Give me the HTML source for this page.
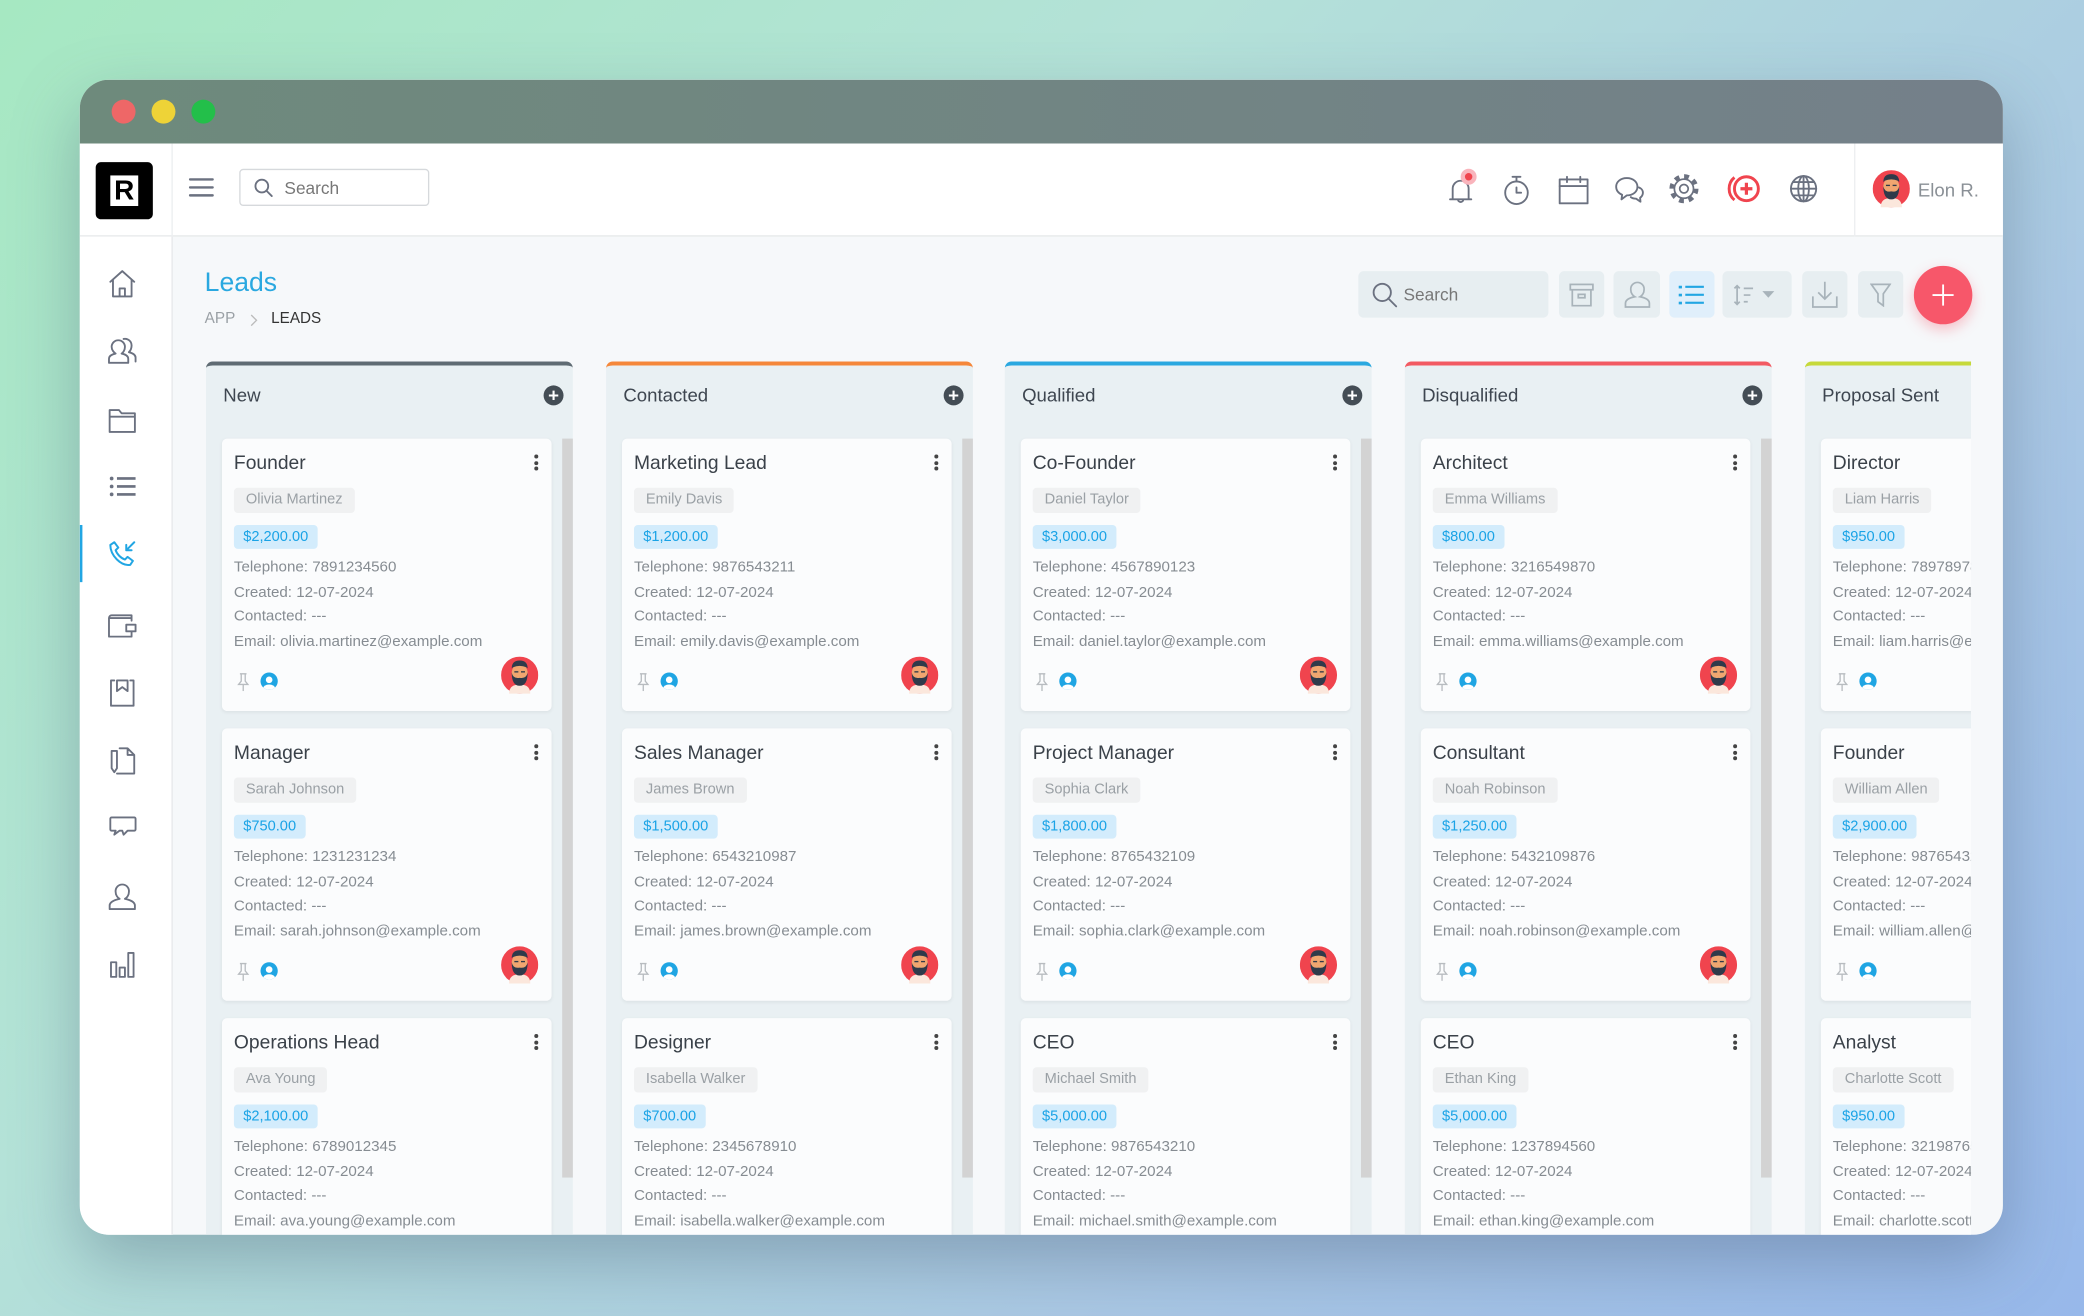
<!DOCTYPE html>
<html><head><meta charset="utf-8">
<style>
*{box-sizing:border-box;margin:0;padding:0}
html,body{width:2084px;height:1316px;overflow:hidden}
body{font-family:"Liberation Sans",sans-serif;background:linear-gradient(135deg,#a6e8c2 0%,#b4e2d8 35%,#aac8e4 70%,#97b8ea 100%)}
#s{position:absolute;left:0;top:0;width:1568px;height:990px;transform:scale(1.32908);transform-origin:0 0}
.win{position:absolute;left:60px;top:60px;width:1447px;height:869px;border-radius:22px;overflow:hidden;background:#f6f8fa;box-shadow:0 20px 50px rgba(60,80,110,.35)}
.tb{position:absolute;left:0;top:0;width:100%;height:48px;background:linear-gradient(90deg,#6e8a7c,#74808a)}
.dot{position:absolute;top:15px;width:18px;height:18px;border-radius:50%}
.hdr{position:absolute;left:0;top:48px;width:100%;height:70px;background:#fff;border-bottom:1px solid #e6e8ea}
.side{position:absolute;left:0;top:118px;width:70px;height:760px;background:#fff;border-right:1px solid #e6e8ea}
.a{position:absolute}
svg{display:block}
.ic{fill:none;stroke:#6b7180;stroke-width:1.4;stroke-linecap:round;stroke-linejoin:round}
.col{position:absolute;top:212px;width:276px;height:700px;background:#e9f0f3;border-radius:5px 5px 0 0;border-top:3px solid}
.col h3{position:absolute;left:13px;top:14px;font-size:14px;font-weight:normal;color:#3e4650}
.plus{position:absolute;left:254px;top:15px;width:15px;height:15px;border-radius:50%;background:#444d55;color:#fff;font-size:14px;line-height:14px;text-align:center;font-weight:bold}
.sb{position:absolute;left:268px;top:55px;width:8px;height:556px;background:#d3d3d3}
.card{position:absolute;left:12px;width:248px;height:205px;background:#fbfcfd;border-radius:4px;box-shadow:0 1px 3px rgba(0,0,0,.06)}
.card .t{position:absolute;left:9px;top:11px;font-size:14.5px;color:#3a4149}
.card .m{position:absolute;left:235px;top:12px;width:3px}
.card .m i{display:block;width:3px;height:3px;border-radius:50%;background:#444;margin-bottom:1.5px}
.card .n{position:absolute;left:9px;top:37px;height:19px;padding:0 9px;background:#f0f1f2;border-radius:3px;font-size:11px;line-height:19px;color:#9aa0a5}
.card .p{position:absolute;left:9px;top:65px;height:18px;padding:0 7px;background:#d3ecfc;border-radius:3px;font-size:11px;line-height:18px;color:#1aa3e6}
.card .l{position:absolute;left:9px;top:88px;font-size:11.4px;line-height:18.6px;color:#868c92;white-space:nowrap}
.card .pin{position:absolute;left:10px;top:176px}
.card .u{position:absolute;left:29px;top:176px;width:13px;height:13px;border-radius:50%;background:#1fa5e3;overflow:hidden}
.card .u:before{content:"";position:absolute;left:4px;top:2.5px;width:5px;height:5px;border-radius:50%;background:#fff}
.card .u:after{content:"";position:absolute;left:2px;top:8.5px;width:9px;height:6px;border-radius:50% 50% 0 0;background:#fff}
.card .av{position:absolute;left:210px;top:164px}
.tbtn{position:absolute;top:144px;height:35px;background:#e7eef1;border-radius:4px}
</style></head><body>
<svg width="0" height="0" style="position:absolute"><defs>
<symbol id="av" viewBox="0 0 28 28"><circle cx="14" cy="14" r="14" fill="#f0444e"/><path d="M6 28 Q6 21 14 21 Q22 21 22 28Z" fill="#fbe7dc"/><ellipse cx="14" cy="12.5" rx="6" ry="7" fill="#f0a670"/><path d="M8 9 Q8 3 14 3 Q20 3 20 9 L19 8 Q14 6 9 8Z" fill="#2f3a4a"/><path d="M8 12 Q8 22 14 22 Q20 22 20 12 Q19 17 14 16 Q9 17 8 12Z" fill="#2f3a4a"/><rect x="10" y="11" width="3" height="1" fill="#2f3a4a"/><rect x="15" y="11" width="3" height="1" fill="#2f3a4a"/></symbol>
<symbol id="pin" viewBox="0 0 12 14"><path d="M3.5 1h5M4.5 1v5.5L2.5 9h7L7.5 6.5V1M6 9v5" fill="none" stroke="#b8bcc0" stroke-width="1"/></symbol>
</defs></svg>
<div id="s">
<div class="win">
 <div class="tb"><div class="dot" style="left:24px;background:#ee6767"></div><div class="dot" style="left:54px;background:#eed337"></div><div class="dot" style="left:84px;background:#23bf4a"></div></div>
 <div class="hdr">
  <div class="a" style="left:12px;top:14px;width:43px;height:43px;background:#000;border-radius:4px"><div style="position:absolute;left:11px;top:10px;width:21px;height:23px;background:#fff;color:#000;font-size:21px;font-weight:bold;line-height:23px;text-align:center">R</div></div>
  <div style="position:absolute;left:69px;top:0;width:1px;height:70px;background:#eceef0"></div>
  <svg class="a ic" style="left:82px;top:25px" width="19" height="16" viewBox="0 0 19 16"><path d="M1 2h17M1 8h17M1 14h17" stroke-width="1.8"/></svg>
  <div class="a" style="left:120px;top:19px;width:143px;height:28px;border:1px solid #d6d9dc;border-radius:3px"><svg class="a ic" style="left:10px;top:6px" width="15" height="15" viewBox="0 0 15 15"><circle cx="6" cy="6" r="4.8"/><path d="M9.5 9.5l4 4"/></svg><span class="a" style="left:33px;top:6px;font-size:13px;color:#777">Search</span></div>
  <svg class="a ic" style="left:1028px;top:18px" width="26" height="30" viewBox="0 0 26 30"><path d="M3 24h16M5 24V16a6 6 0 0 1 12 0v8M9 24a2 2 0 0 0 4 0"/><circle cx="17" cy="7" r="6" fill="#f9b4bc" stroke="none"/><circle cx="17" cy="7" r="2.8" fill="#f0444e" stroke="none"/></svg>
  <svg class="a ic" style="left:1070px;top:23px" width="22" height="24" viewBox="0 0 22 24"><circle cx="11" cy="14" r="8.5"/><path d="M11 3v2.5M8 2h6M11 10v4h3.5"/></svg>
  <svg class="a ic" style="left:1112px;top:24px" width="24" height="22" viewBox="0 0 24 22"><rect x="1.5" y="3" width="21" height="18"/><path d="M1.5 8h21M7 1v4M17 1v4"/></svg>
  <svg class="a ic" style="left:1154px;top:24px" width="24" height="22" viewBox="0 0 24 22"><path d="M10 2c5 0 8 3 8 6.5S15 15 10 15l-4 3 .5-3.5C3.5 13.5 2 11 2 8.5 2 5 5 2 10 2z"/><path d="M19 9c2.5 1 3.5 3 3 5-.3 1.3-1 2.2-2 2.8l.3 3-3.3-2.3c-1.5 0-3-.4-4-1.2"/></svg>
  <svg class="a" style="left:1195px;top:22px" width="24" height="24" viewBox="0 0 24 24" fill="none" stroke="#6b7180"><circle cx="12" cy="12" r="9.2" stroke-width="3.5" stroke-dasharray="3.6 3.6"/><circle cx="12" cy="12" r="7.2" stroke-width="1.3" fill="#fff"/><circle cx="12" cy="12" r="3.2" stroke-width="1.3"/></svg>
  <svg class="a" style="left:1238px;top:22px" width="28" height="24" viewBox="0 0 28 24"><path d="M7 3.5C4.5 5.5 3 8.5 3 12s1.5 6.5 4 8.5" fill="none" stroke="#f0444e" stroke-width="2.2"/><circle cx="16" cy="12" r="9" fill="none" stroke="#f0444e" stroke-width="2.2"/><path d="M16 7.5v9M11.5 12h9" stroke="#f0444e" stroke-width="2.4"/></svg>
  <svg class="a ic" style="left:1286px;top:23px" width="22" height="22" viewBox="0 0 22 22"><circle cx="11" cy="11" r="9.5"/><ellipse cx="11" cy="11" rx="4" ry="9.5"/><path d="M1.5 11h19M3 6h16M3 16h16M11 1.5v19"/></svg>
  <div style="position:absolute;left:1335px;top:0;width:1px;height:70px;background:#eceef0"></div>
  <svg class="a" style="left:1349px;top:20px" width="28" height="28"><use href="#av"/></svg>
  <span class="a" style="left:1383px;top:27px;font-size:14px;color:#8a9096">Elon R.</span>
 </div>
 <div class="side">
  <svg class="a ic" style="left:21px;top:24px" width="22" height="22" viewBox="0 0 22 22"><path d="M2 10L11 2l9 8M4 8.5V21h14V8.5M9 21v-6h4v6"/></svg>
  <svg class="a ic" style="left:21px;top:75px" width="24" height="22" viewBox="0 0 24 22"><path d="M8 3a5 5 0 0 1 5 5c0 2.5-1.5 4.5-2.5 5 3 .6 5 2 5 4v3H1v-3c0-2 2-3.4 5-4C5 12.5 3 10.5 3 8a5 5 0 0 1 5-5zM12 2a5 5 0 0 1 6 5c0 2.5-1.2 4.2-2 5 3 .8 5 2 5 4v3"/></svg>
  <svg class="a ic" style="left:21px;top:129px" width="22" height="19" viewBox="0 0 22 19"><path d="M1.5 1.5h7l2 2.5h10v14h-19zM1.5 6.5h19"/></svg>
  <svg class="a" style="left:22px;top:180px" width="22" height="16" viewBox="0 0 22 16"><g fill="#6b7180"><circle cx="2" cy="2" r="1.4"/><circle cx="2" cy="8" r="1.4"/><circle cx="2" cy="14" r="1.4"/><rect x="6" y="1" width="14" height="2"/><rect x="6" y="7" width="14" height="2"/><rect x="6" y="13" width="14" height="2"/></g></svg>
  <div class="a" style="left:0;top:217px;width:2px;height:43px;background:#22a6e3"></div>
  <svg class="a" style="left:21px;top:228px" width="22" height="22" viewBox="0 0 22 22" fill="none" stroke="#22a6e3" stroke-width="1.5" stroke-linecap="round" stroke-linejoin="round"><path d="M5 2l3 4-2 2c1 3 4 6 7 7l2-2 4 3-2 3C10 20 2 12 2 4z"/><path d="M20 2l-6 6M14 4v4h4"/></svg>
  <svg class="a ic" style="left:21px;top:283px" width="22" height="20" viewBox="0 0 22 20"><path d="M18 6V2H3a2 2 0 0 0-2 2v14h17v-4M1 4h17v2M14 9h7v5h-7z"/></svg>
  <svg class="a ic" style="left:22px;top:332px" width="20" height="22" viewBox="0 0 20 22"><path d="M4 2H1.5v19h17V2H16M6 2h8v8l-4-3-4 3z"/></svg>
  <svg class="a ic" style="left:22px;top:383px" width="20" height="22" viewBox="0 0 20 22"><path d="M8 2h6l5 5v14H6M14 2v5h5M2 4h4v13l-2 3-2-3z"/></svg>
  <svg class="a ic" style="left:21px;top:436px" width="22" height="20" viewBox="0 0 22 20"><path d="M3 1h17a1 1 0 0 1 1 1v8a1 1 0 0 1-1 1h-5l-3 3-1-3H9l-4 3 1-3H3a1 1 0 0 1-1-1V2a1 1 0 0 1 1-1z"/></svg>
  <svg class="a ic" style="left:21px;top:486px" width="22" height="21" viewBox="0 0 22 21"><path d="M11 1.5a5 5 0 0 1 5 5.5c0 2.5-1.5 4.5-3 5.3 4 .8 7.5 2.5 7.5 5V20h-19v-2.7c0-2.5 3.5-4.2 7.5-5C7.5 11.5 6 9.5 6 7a5 5 0 0 1 5-5.5z"/></svg>
  <svg class="a ic" style="left:22px;top:537px" width="20" height="21" viewBox="0 0 20 21"><path d="M1.5 9h4v11h-4zM8 13h4v7H8zM14.5 2h4v18h-4z"/></svg>
 </div>
 <!-- content -->
 <div class="a" style="left:94px;top:142px;font-size:20px;color:#2aa8e0">Leads</div>
 <div class="a" style="left:94px;top:174px;font-size:11.5px;color:#9aa0a5">APP</div>
 <svg class="a" style="left:128px;top:176px" width="6" height="10" viewBox="0 0 6 10"><path d="M1 1l4 4-4 4" fill="none" stroke="#bbb" stroke-width="1"/></svg>
 <div class="a" style="left:144px;top:174px;font-size:11.5px;color:#333">LEADS</div>
 <div class="tbtn" style="left:962px;width:143px"><svg class="a ic" style="left:10px;top:8px" width="20" height="20" viewBox="0 0 20 20"><circle cx="8" cy="8" r="6.5"/><path d="M12.5 12.5l6 6"/></svg><span class="a" style="left:34px;top:10px;font-size:13px;color:#777">Search</span></div>
 <div class="tbtn" style="left:1113px;width:34px"><svg class="a" style="left:7px;top:8px" width="20" height="20" viewBox="0 0 20 20" fill="none" stroke="#a8b3ba" stroke-width="1.3"><rect x="1.5" y="2" width="17" height="4"/><path d="M3 6v12h14V6M7.5 9.5h5v2.5h-5z"/></svg></div>
 <div class="tbtn" style="left:1154px;width:35px"><svg class="a" style="left:8px;top:7px" width="20" height="21" viewBox="0 0 20 21" fill="none" stroke="#a8b3ba" stroke-width="1.3"><path d="M10 1.5a5 5 0 0 1 5 5.5c0 2.5-1.5 4.5-3 5.3 4 .8 7 2.5 7 5V20H1v-2.7c0-2.5 3-4.2 7-5C6.5 11.5 5 9.5 5 7a5 5 0 0 1 5-5.5z"/></svg></div>
 <div class="tbtn" style="left:1196px;width:34px;background:#e0effb"><svg class="a" style="left:7px;top:10px" width="20" height="16" viewBox="0 0 20 16"><g fill="#22a6e3"><rect x="0" y="1" width="2.5" height="2"/><rect x="0" y="7" width="2.5" height="2"/><rect x="0" y="13" width="2.5" height="2"/><rect x="5" y="1" width="14" height="1.6"/><rect x="5" y="7" width="14" height="1.6"/><rect x="5" y="13" width="14" height="1.6"/></g></svg></div>
 <div class="tbtn" style="left:1236px;width:52px"><svg class="a" style="left:8px;top:10px" width="38" height="16" viewBox="0 0 38 16" fill="none" stroke="#a8b3ba" stroke-width="1.3"><path d="M3 1v14M1 3l2-2 2 2M1 13l2 2 2-2M8 3h7M8 8h5M8 13h3"/><path d="M22 5h9l-4.5 5z" fill="#a8b3ba" stroke="none"/></svg></div>
 <div class="tbtn" style="left:1296px;width:34px"><svg class="a" style="left:7px;top:7px" width="20" height="21" viewBox="0 0 20 21" fill="none" stroke="#a8b3ba" stroke-width="1.3"><path d="M10 1v13M5 9l5 5 5-5M1 12v8h18v-8"/></svg></div>
 <div class="tbtn" style="left:1338px;width:34px"><svg class="a" style="left:9px;top:9px" width="16" height="18" viewBox="0 0 16 18" fill="none" stroke="#a8b3ba" stroke-width="1.3"><path d="M1 1h14l-5 7v9l-4-3V8z"/></svg></div>
 <div class="a" style="left:1380px;top:140px;width:44px;height:44px;border-radius:50%;background:#f7576a;box-shadow:0 4px 10px rgba(247,87,106,.35)"><svg class="a" style="left:14px;top:14px" width="16" height="16"><path d="M8 0v16M0 8h16" stroke="#fff" stroke-width="1.4"/></svg></div>

 <div class="a" style="left:94px;top:0;width:1329px;height:869px;overflow:hidden">
 <div class="col" style="left:1px;border-color:#5f6b73"><h3>New</h3><div class="plus">+</div><div class="sb"></div>
  <div class="card" style="top:55px"><div class="t">Founder</div><div class="m"><i></i><i></i><i></i></div><div class="n">Olivia Martinez</div><div class="p">$2,200.00</div><div class="l">Telephone: 7891234560<br>Created: 12-07-2024<br>Contacted: ---<br>Email: olivia.martinez@example.com</div><svg class="pin" width="12" height="14"><use href="#pin"/></svg><div class="u"></div><svg class="av" width="28" height="28"><use href="#av"/></svg></div>
  <div class="card" style="top:273px"><div class="t">Manager</div><div class="m"><i></i><i></i><i></i></div><div class="n">Sarah Johnson</div><div class="p">$750.00</div><div class="l">Telephone: 1231231234<br>Created: 12-07-2024<br>Contacted: ---<br>Email: sarah.johnson@example.com</div><svg class="pin" width="12" height="14"><use href="#pin"/></svg><div class="u"></div><svg class="av" width="28" height="28"><use href="#av"/></svg></div>
  <div class="card" style="top:491px"><div class="t">Operations Head</div><div class="m"><i></i><i></i><i></i></div><div class="n">Ava Young</div><div class="p">$2,100.00</div><div class="l">Telephone: 6789012345<br>Created: 12-07-2024<br>Contacted: ---<br>Email: ava.young@example.com</div></div>
 </div>
 <div class="col" style="left:302px;border-color:#f5873a"><h3>Contacted</h3><div class="plus">+</div><div class="sb"></div>
  <div class="card" style="top:55px"><div class="t">Marketing Lead</div><div class="m"><i></i><i></i><i></i></div><div class="n">Emily Davis</div><div class="p">$1,200.00</div><div class="l">Telephone: 9876543211<br>Created: 12-07-2024<br>Contacted: ---<br>Email: emily.davis@example.com</div><svg class="pin" width="12" height="14"><use href="#pin"/></svg><div class="u"></div><svg class="av" width="28" height="28"><use href="#av"/></svg></div>
  <div class="card" style="top:273px"><div class="t">Sales Manager</div><div class="m"><i></i><i></i><i></i></div><div class="n">James Brown</div><div class="p">$1,500.00</div><div class="l">Telephone: 6543210987<br>Created: 12-07-2024<br>Contacted: ---<br>Email: james.brown@example.com</div><svg class="pin" width="12" height="14"><use href="#pin"/></svg><div class="u"></div><svg class="av" width="28" height="28"><use href="#av"/></svg></div>
  <div class="card" style="top:491px"><div class="t">Designer</div><div class="m"><i></i><i></i><i></i></div><div class="n">Isabella Walker</div><div class="p">$700.00</div><div class="l">Telephone: 2345678910<br>Created: 12-07-2024<br>Contacted: ---<br>Email: isabella.walker@example.com</div></div>
 </div>
 <div class="col" style="left:602px;border-color:#2aa8e0"><h3>Qualified</h3><div class="plus">+</div><div class="sb"></div>
  <div class="card" style="top:55px"><div class="t">Co-Founder</div><div class="m"><i></i><i></i><i></i></div><div class="n">Daniel Taylor</div><div class="p">$3,000.00</div><div class="l">Telephone: 4567890123<br>Created: 12-07-2024<br>Contacted: ---<br>Email: daniel.taylor@example.com</div><svg class="pin" width="12" height="14"><use href="#pin"/></svg><div class="u"></div><svg class="av" width="28" height="28"><use href="#av"/></svg></div>
  <div class="card" style="top:273px"><div class="t">Project Manager</div><div class="m"><i></i><i></i><i></i></div><div class="n">Sophia Clark</div><div class="p">$1,800.00</div><div class="l">Telephone: 8765432109<br>Created: 12-07-2024<br>Contacted: ---<br>Email: sophia.clark@example.com</div><svg class="pin" width="12" height="14"><use href="#pin"/></svg><div class="u"></div><svg class="av" width="28" height="28"><use href="#av"/></svg></div>
  <div class="card" style="top:491px"><div class="t">CEO</div><div class="m"><i></i><i></i><i></i></div><div class="n">Michael Smith</div><div class="p">$5,000.00</div><div class="l">Telephone: 9876543210<br>Created: 12-07-2024<br>Contacted: ---<br>Email: michael.smith@example.com</div></div>
 </div>
 <div class="col" style="left:903px;border-color:#f25a62"><h3>Disqualified</h3><div class="plus">+</div><div class="sb"></div>
  <div class="card" style="top:55px"><div class="t">Architect</div><div class="m"><i></i><i></i><i></i></div><div class="n">Emma Williams</div><div class="p">$800.00</div><div class="l">Telephone: 3216549870<br>Created: 12-07-2024<br>Contacted: ---<br>Email: emma.williams@example.com</div><svg class="pin" width="12" height="14"><use href="#pin"/></svg><div class="u"></div><svg class="av" width="28" height="28"><use href="#av"/></svg></div>
  <div class="card" style="top:273px"><div class="t">Consultant</div><div class="m"><i></i><i></i><i></i></div><div class="n">Noah Robinson</div><div class="p">$1,250.00</div><div class="l">Telephone: 5432109876<br>Created: 12-07-2024<br>Contacted: ---<br>Email: noah.robinson@example.com</div><svg class="pin" width="12" height="14"><use href="#pin"/></svg><div class="u"></div><svg class="av" width="28" height="28"><use href="#av"/></svg></div>
  <div class="card" style="top:491px"><div class="t">CEO</div><div class="m"><i></i><i></i><i></i></div><div class="n">Ethan King</div><div class="p">$5,000.00</div><div class="l">Telephone: 1237894560<br>Created: 12-07-2024<br>Contacted: ---<br>Email: ethan.king@example.com</div></div>
 </div>
 <div class="col" style="left:1204px;border-color:#c6d93a"><h3>Proposal Sent</h3><div class="plus">+</div><div class="sb"></div>
  <div class="card" style="top:55px"><div class="t">Director</div><div class="m"><i></i><i></i><i></i></div><div class="n">Liam Harris</div><div class="p">$950.00</div><div class="l">Telephone: 7897897890<br>Created: 12-07-2024<br>Contacted: ---<br>Email: liam.harris@example.com</div><svg class="pin" width="12" height="14"><use href="#pin"/></svg><div class="u"></div><svg class="av" width="28" height="28"><use href="#av"/></svg></div>
  <div class="card" style="top:273px"><div class="t">Founder</div><div class="m"><i></i><i></i><i></i></div><div class="n">William Allen</div><div class="p">$2,900.00</div><div class="l">Telephone: 9876543210<br>Created: 12-07-2024<br>Contacted: ---<br>Email: william.allen@example.com</div><svg class="pin" width="12" height="14"><use href="#pin"/></svg><div class="u"></div><svg class="av" width="28" height="28"><use href="#av"/></svg></div>
  <div class="card" style="top:491px"><div class="t">Analyst</div><div class="m"><i></i><i></i><i></i></div><div class="n">Charlotte Scott</div><div class="p">$950.00</div><div class="l">Telephone: 3219876540<br>Created: 12-07-2024<br>Contacted: ---<br>Email: charlotte.scott@example.com</div></div>
 </div>
 </div>
</div>
</div>
</body></html>
